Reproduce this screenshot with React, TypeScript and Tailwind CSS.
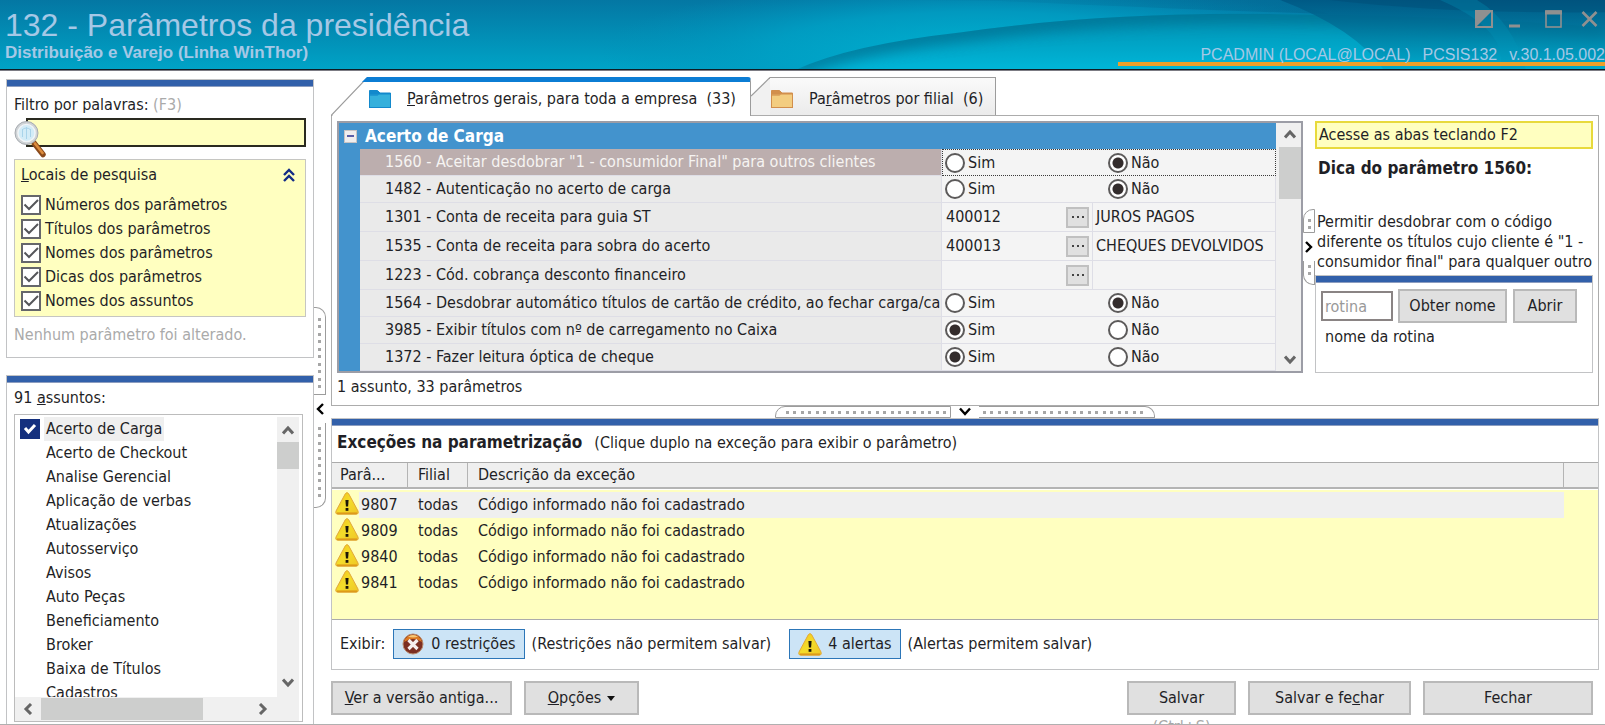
import type { ReactNode } from "react";
import clsx from "clsx";

type Choice = "sim" | "nao";

type Param = {
  code: string;
  title: string;
  choice?: Choice;
  value?: string;
  description?: string;
  selected?: boolean;
};

const searchPlaces = ["Números dos parâmetros", "Títulos dos parâmetros", "Nomes dos parâmetros", "Dicas dos parâmetros", "Nomes dos assuntos"];

const subjects = [
  "Acerto de Carga",
  "Acerto de Checkout",
  "Analise Gerencial",
  "Aplicação de verbas",
  "Atualizações",
  "Autosserviço",
  "Avisos",
  "Auto Peças",
  "Beneficiamento",
  "Broker",
  "Baixa de Títulos",
  "Cadastros",
];

const params: Param[] = [
  { code: "1560", title: 'Aceitar desdobrar "1 - consumidor Final" para outros clientes', choice: "nao", selected: true },
  { code: "1482", title: "Autenticação no acerto de carga", choice: "nao" },
  { code: "1301", title: "Conta de receita para guia ST", value: "400012", description: "JUROS PAGOS" },
  { code: "1535", title: "Conta de receita para sobra do acerto", value: "400013", description: "CHEQUES DEVOLVIDOS" },
  { code: "1223", title: "Cód. cobrança desconto financeiro", value: "", description: "" },
  { code: "1564", title: "Desdobrar automático títulos de cartão de crédito, ao fechar carga/ca", choice: "nao" },
  { code: "3985", title: "Exibir títulos com nº de carregamento no Caixa", choice: "sim" },
  { code: "1372", title: "Fazer leitura óptica de cheque", choice: "sim" },
];

const exceptions = ["9807", "9809", "9840", "9841"];

const Chevron = ({ className, d, width = 3 }: { className?: string; d: string; width?: number }) => (
  <svg viewBox="0 0 12 12" className={clsx("size-3 shrink-0", className)} fill="none" stroke="currentColor" strokeWidth={width} aria-hidden="true">
    <path d={d} />
  </svg>
);

const UP = "M1 9.5 L6 4 L11 9.5";
const DOWN = "M1 2.5 L6 8 L11 2.5";
const LEFT = "M9 1 L4 6 L9 11";
const RIGHT = "M3 1 L8 6 L3 11";

const WarningIcon = ({ className }: { className?: string }) => (
  <svg viewBox="0 0 24 23" className={clsx("h-[23px] w-6 shrink-0", className)} aria-hidden="true">
    <defs>
      <linearGradient id="warn" x1="0" y1="0" x2="1" y2="1">
        <stop offset="0" stopColor="#f4c21c" />
        <stop offset="0.5" stopColor="#f3dc2a" />
        <stop offset="1" stopColor="#efc526" />
      </linearGradient>
    </defs>
    <path d="M10.4 1.6 Q12 -0.4 13.6 1.6 L23 19 Q24 22 21.5 22.3 H2.5 Q0 22 1 19 Z" fill="url(#warn)" stroke="#e2a83a" strokeWidth="1" />
    <path d="M2 21.2 H22" stroke="#dd9a1a" strokeWidth="1.6" />
    <path d="M10.4 8 H13.6 L13.1 14.6 H10.9 Z" fill="#1c1608" />
    <rect x="10.6" y="16" width="2.8" height="2.8" fill="#1c1608" />
  </svg>
);

const ErrorIcon = () => (
  <svg viewBox="0 0 22 22" className="size-[22px] shrink-0" aria-hidden="true">
    <circle cx="11" cy="11" r="10" fill="#7c2f22" stroke="#b98a6c" strokeWidth="1" />
    <path d="M2 9 A9.2 9.2 0 0 1 20 9 Q11 3 2 9 Z" fill="#dd7a22" />
    <path d="M6 3.5 Q11 0.5 16 3.5 Q11 5.5 6 3.5 Z" fill="#f5c878" />
    <path d="M6.5 7 L15.5 16 M15.5 7 L6.5 16" stroke="#f6eeee" strokeWidth="3.2" />
  </svg>
);

const FolderIcon = ({ dark, light }: { dark: string; light: string }) => (
  <svg viewBox="0 0 24 20" className="h-5 w-6 shrink-0" aria-hidden="true">
    <path d="M1.5 1.5 H9.5 L12 4 H22.5 V6 H1.5 Z" fill={dark} stroke={dark} />
    <rect x="1.5" y="5" width="21" height="13.5" fill={light} stroke={dark} />
    <path d="M2 5 H11 L9.5 7 H2 Z" fill={dark} opacity="0.6" />
  </svg>
);

const MagnifierIcon = () => (
  <svg viewBox="0 0 32 38" className="h-[38px] w-8" aria-hidden="true">
    <path d="M20 23 L29 34.5" stroke="#8a4a1c" strokeWidth="5.5" strokeLinecap="round" />
    <path d="M21 23.5 L28.5 33" stroke="#dc8c3c" strokeWidth="2.6" strokeLinecap="round" />
    <circle cx="12.5" cy="13" r="11.5" fill="#cfd3d6" stroke="#a7abb0" strokeWidth="1" />
    <circle cx="12.5" cy="13" r="8.6" fill="#d3ecf7" stroke="#f2f5f7" strokeWidth="1.4" />
    <path d="M8.5 9 V17 M12.5 7 V19 M16.5 9 V17 M8 10 Q12 6 17 10" fill="none" stroke="#a9d4ea" strokeWidth="1" />
  </svg>
);

const Panel = ({ className, children }: { className?: string; children: ReactNode }) => (
  <section className={clsx("flex flex-col border border-[#c2c3c5] bg-white", className)}>
    <div className="h-[7px] shrink-0 border-b border-[#8c9dc0] bg-[#3260aa]" />
    {children}
  </section>
);

const GrayButton = ({ className, children }: { className?: string; children: ReactNode }) => (
  <button type="button" className={clsx("shrink-0 border-2 border-[#b9b9b9] bg-[#e0e0e0] text-center whitespace-nowrap", className)}>
    {children}
  </button>
);

const CheckLine = ({ id, label }: { id: string; label: string }) => (
  <div className="flex h-6 items-center gap-1">
    <span className="grid size-5 shrink-0">
      <input id={id} type="checkbox" defaultChecked className="col-start-1 row-start-1 size-5 appearance-none border-2 border-[#66676b] bg-white" />
      <svg viewBox="0 0 20 20" className="pointer-events-none col-start-1 row-start-1 size-5" fill="none" stroke="#55565a" strokeWidth="2" aria-hidden="true">
        <path d="M3.5 9.5 L8 14 L17 5" />
      </svg>
    </span>
    <label htmlFor={id}>{label}</label>
  </div>
);

const RadioOption = ({ name, label, checked }: { name: string; label: string; checked: boolean }) => (
  <label className="flex w-[163px] shrink-0 items-center gap-[3px]">
    <input
      type="radio"
      name={name}
      defaultChecked={checked}
      className="size-5 appearance-none rounded-full border-2 border-[#5c5a5a] bg-white checked:bg-[radial-gradient(circle,#332c2c_0_5px,#ffffff_6px)]"
    />
    {label}
  </label>
);

const WAVE = "M795 69 Q850 44 960 32 Q1110 11 1280 14 Q1450 15 1605 27";

const Header = () => (
  <header className="relative h-[71px] shrink-0 overflow-hidden border-b border-[#7c7c84] font-['Liberation_Sans',Arial,sans-serif] text-[#a5c8e6]">
    <svg viewBox="0 0 1605 69" preserveAspectRatio="none" className="absolute inset-0 h-full w-full" aria-hidden="true">
      <defs>
        <linearGradient id="base" x1="0" y1="0" x2="0" y2="1">
          <stop offset="0" stopColor="#0477a3" />
          <stop offset="1" stopColor="#00a4c7" />
        </linearGradient>
        <radialGradient id="glow" gradientUnits="userSpaceOnUse" cx="0" cy="0" r="1" gradientTransform="translate(980 50) scale(380 70)">
          <stop offset="0" stopColor="#00b0d0" />
          <stop offset="0.55" stopColor="#00a0c5" stopOpacity="0.8" />
          <stop offset="1" stopColor="#008fb8" stopOpacity="0" />
        </radialGradient>
        <linearGradient id="wave" gradientUnits="userSpaceOnUse" x1="0" y1="14" x2="0" y2="69">
          <stop offset="0" stopColor="#0090b2" />
          <stop offset="1" stopColor="#00b6d8" />
        </linearGradient>
        <linearGradient id="night" x1="0" y1="0" x2="0" y2="1">
          <stop offset="0" stopColor="#005a86" />
          <stop offset="0.5" stopColor="#00749a" stopOpacity="0.7" />
          <stop offset="1" stopColor="#0090b4" stopOpacity="0.3" />
        </linearGradient>
        <linearGradient id="dusk" x1="0" y1="0" x2="1" y2="0">
          <stop offset="0" stopColor="#006a94" stopOpacity="0" />
          <stop offset="1" stopColor="#005580" />
        </linearGradient>
        <clipPath id="wave-clip">
          <path d={`${WAVE} V69 Z`} />
        </clipPath>
        <filter id="soft" x="-5%" y="-60%" width="110%" height="220%">
          <feGaussianBlur stdDeviation="7" />
        </filter>
      </defs>
      <rect width="1605" height="69" fill="url(#base)" />
      <rect x="600" width="780" height="69" fill="url(#glow)" />
      <path d="M840 0 H1280 Q1310 8 1330 14 Q1150 8 1000 1 Z" fill="url(#dusk)" opacity="0.35" />
      <g clipPath="url(#wave-clip)">
        <rect x="780" width="825" height="69" fill="url(#wave)" />
        <path d={WAVE} fill="none" stroke="#006e90" strokeWidth="18" opacity="0.75" filter="url(#soft)" />
      </g>
      <path d="M1280 0 H1605 V69 H1384 Q1355 28 1280 0 Z" fill="url(#night)" />
      <path d="M1330 0 H1605 V12 Q1450 14 1330 0 Z" fill="#00486f" opacity="0.35" />
      <path d="M1477 0 Q1512 20 1526 69 H1500 Q1510 30 1440 0 Z" fill="#0096ba" opacity="0.3" />
    </svg>
    <div className="absolute inset-x-0 bottom-0 h-px bg-[#101c24]" />
    <div className="absolute right-0 bottom-1 h-1 w-[487px] bg-[#eda02a]" />
    <div className="relative flex h-full justify-between pl-[5px]">
      <div className="pt-[7px] whitespace-nowrap">
        <h1 className="text-[32px] leading-9">132 - Parâmetros da presidência</h1>
        <p className="text-[17px] leading-5 font-bold">Distribuição e Varejo (Linha WinThor)</p>
      </div>
      <div className="flex flex-col items-end justify-between pt-2.5 pb-[5px]">
        <div className="flex items-center pr-[7px] text-[#909090]">
          <button type="button" aria-label="Tema" className="mr-4">
            <svg viewBox="0 0 18 18" className="size-[18px]" aria-hidden="true">
              <rect x="1" y="1" width="16" height="16" fill="none" stroke="currentColor" strokeWidth="2" />
              <path d="M1 1 H17 L1 17 Z" fill="currentColor" />
            </svg>
          </button>
          <button type="button" aria-label="Minimizar" className="mr-6">
            <svg viewBox="0 0 12 18" className="h-[18px] w-3" aria-hidden="true">
              <path d="M0 16 H11" stroke="currentColor" strokeWidth="3" />
            </svg>
          </button>
          <button type="button" aria-label="Maximizar" className="mr-[18px]">
            <svg viewBox="0 0 18 18" className="size-[18px]" aria-hidden="true">
              <rect x="1" y="1" width="15" height="16" fill="none" stroke="currentColor" strokeWidth="1.6" />
              <path d="M0 2.5 H17" stroke="currentColor" strokeWidth="4" />
            </svg>
          </button>
          <button type="button" aria-label="Fechar janela">
            <svg viewBox="0 0 17 18" className="h-[18px] w-[17px]" aria-hidden="true">
              <path d="M1.5 2 L15.5 16 M15.5 2 L1.5 16" stroke="currentColor" strokeWidth="2.6" />
            </svg>
          </button>
        </div>
        <p className="flex gap-3 text-[16px] leading-5 whitespace-nowrap">
          <span>PCADMIN (LOCAL@LOCAL)</span>
          <span>PCSIS132</span>
          <span>v.30.1.05.002</span>
        </p>
      </div>
    </div>
  </header>
);

const FilterPanel = () => (
  <Panel className="shrink-0">
    <div className="px-[7px] pt-2 pb-3">
      <label htmlFor="filtro">
        Filtro por palavras: <span className="text-[#aaaaaa]">(F3)</span>
      </label>
      <div className="relative mt-[3px] pl-3">
        <input id="filtro" type="text" className="block h-[29px] w-full border-2 border-[#2a2a20] bg-[#ffffc0] pr-1 pl-6 outline-none" />
        <span className="pointer-events-none absolute top-0.5 left-0">
          <MagnifierIcon />
        </span>
      </div>
      <fieldset className="mt-3 border border-[#c6c6c2] bg-[#ffffc0] px-1.5 pt-[5px] pb-[3px]">
        <div className="mb-2 flex items-center justify-between pr-1">
          <span>
            <u>L</u>ocais de pesquisa
          </span>
          <button type="button" aria-label="Recolher" className="text-[#142c86]">
            <svg viewBox="0 0 12 14" className="h-3.5 w-3" fill="none" stroke="currentColor" strokeWidth="2.4" aria-hidden="true">
              <path d="M1 7 L6 2 L11 7 M1 13 L6 8 L11 13" />
            </svg>
          </button>
        </div>
        {searchPlaces.map((place) => (
          <CheckLine key={place} id={place} label={place} />
        ))}
      </fieldset>
      <p className="mt-2 text-[#aaaaaa]">Nenhum parâmetro foi alterado.</p>
    </div>
  </Panel>
);

const SubjectsPanel = () => (
  <Panel className="min-h-0 flex-1 border-b-0">
    <div className="flex min-h-0 flex-1 flex-col px-[7px] pt-[5px] pr-2.5 pb-0.5">
      <p>
        91 <u>a</u>ssuntos:
      </p>
      <div className="mt-1.5 flex min-h-0 flex-1 flex-col border border-[#bcbcbc]">
        <div className="flex min-h-0 flex-1">
          <ul className="min-w-0 flex-1 overflow-hidden pt-0.5">
            {subjects.map((subject, index) => (
              <li key={subject} className="flex h-6 items-center pl-[5px]">
                <span className="mr-1 grid size-5 shrink-0">
                  {index === 0 && (
                    <>
                      <input id="assunto-0" type="checkbox" defaultChecked className="col-start-1 row-start-1 size-5 appearance-none bg-[#14307e]" />
                      <svg viewBox="0 0 20 20" className="pointer-events-none col-start-1 row-start-1 size-5" fill="none" stroke="#ffffff" strokeWidth="3" aria-hidden="true">
                        <path d="M5 9 L8.5 13 L15 6" />
                      </svg>
                    </>
                  )}
                </span>
                {index === 0 ? (
                  <label htmlFor="assunto-0" className="bg-[#efefef] px-0.5 leading-6">
                    {subject}
                  </label>
                ) : (
                  <span className="px-0.5">{subject}</span>
                )}
              </li>
            ))}
          </ul>
          <div className="mt-0.5 mr-[3px] flex w-[22px] flex-col items-center bg-[#f0f0f0] text-[#666666]">
            <Chevron d={UP} className="mt-[7px] mb-[6px]" />
            <div className="h-[27px] w-full bg-[#cdcecd]" />
            <Chevron d={DOWN} className="mt-auto mb-2" />
          </div>
        </div>
        <div className="mr-[3px] flex h-6 shrink-0 items-center bg-[#f0f0f0] text-[#666666]">
          <Chevron d={LEFT} className="mx-[7px]" />
          <div className="h-[22px] w-[162px] bg-[#cdcecd]" />
          <Chevron d={RIGHT} className="mr-[30px] ml-auto" />
        </div>
      </div>
    </div>
  </Panel>
);

const DOTS_V = "w-[3px] bg-[repeating-linear-gradient(#a6a6a6_0_3px,transparent_3px_7px,#a6a6a6_7px_10px,transparent_10px_15px)]";
const DOTS_H = "h-[3px] flex-1 bg-[repeating-linear-gradient(90deg,#a6a6a6_0_3px,transparent_3px_7px,#a6a6a6_7px_10px,transparent_10px_15px)]";

const SideSplitter = () => (
  <div className="mt-[236px] mr-[5px] flex w-3 shrink-0 flex-col items-center">
    <div className="flex h-[88px] w-full justify-center rounded-tr-[10px] border border-l-0 border-[#9c9c9c] pt-2.5 pb-1">
      <div className={DOTS_V} />
    </div>
    <button type="button" aria-label="Recolher painel" className="flex h-7 items-center">
      <Chevron d={LEFT} className="text-black" width={2.4} />
    </button>
    <div className="flex h-[85px] w-full justify-center rounded-br-[10px] border border-t-0 border-l-0 border-[#9c9c9c] pt-1 pb-2">
      <div className={DOTS_V} />
    </div>
  </div>
);

const BottomSplitter = () => (
  <div className="flex h-3 shrink-0 items-center justify-center">
    <div className="flex h-3 w-[176px] items-center rounded-tl-[10px] border border-[#9c9c9c] pr-1 pl-2.5">
      <div className={DOTS_H} />
    </div>
    <button type="button" aria-label="Recolher exceções" className="flex w-7 justify-center">
      <Chevron d={DOWN} className="text-black" width={2.4} />
    </button>
    <div className="flex h-3 w-[176px] items-center rounded-tr-[10px] border border-l-0 border-[#9c9c9c] pr-2.5 pl-1">
      <div className={DOTS_H} />
    </div>
  </div>
);

const HintSplitter = () => (
  <div className="flex w-3 shrink-0 flex-col items-center justify-center">
    <div className="flex h-6 w-full items-center justify-center rounded-tl-[10px] border border-[#9c9c9c] pt-1.5">
      <div className="h-2.5 w-[3px] bg-[repeating-linear-gradient(#a6a6a6_0_3px,transparent_3px_7px)]" />
    </div>
    <button type="button" aria-label="Recolher dica" className="flex h-7 items-center">
      <Chevron d={RIGHT} className="text-black" width={2.4} />
    </button>
    <div className="flex h-6 w-full items-center justify-center rounded-bl-[10px] border border-t-0 border-[#9c9c9c] pb-1.5">
      <div className="h-2.5 w-[3px] bg-[repeating-linear-gradient(#a6a6a6_0_3px,transparent_3px_7px)]" />
    </div>
  </div>
);

const Tabs = () => (
  <div role="tablist" className="relative z-10 -mb-px flex h-[39px] items-start whitespace-nowrap">
    <button type="button" role="tab" aria-selected="true" className="flex h-[39px]">
      <svg viewBox="0 0 36 39" className="h-[39px] w-9" aria-hidden="true">
        <path d="M1 39 L36 1 V39 Z" fill="#ffffff" />
        <path d="M0.5 39 V38 L36 1" fill="none" stroke="#9c9c9c" strokeWidth="1.2" />
        <path d="M31 5 L36 0 V5 Z" fill="#0b7dd4" />
      </svg>
      <span className="flex h-full items-center gap-[15px] rounded-tr-[3px] border-t-[5px] border-r border-t-[#0b7dd4] border-r-[#9c9c9c] bg-white pr-3.5 pl-px">
        <FolderIcon dark="#1389cc" light="#35b0dc" />
        <span>
          <u>P</u>arâmetros gerais, para toda a empresa&nbsp; (33)
        </span>
      </span>
    </button>
    <button type="button" role="tab" aria-selected="false" className="flex h-[38px]">
      <svg viewBox="0 0 19 38" className="h-[38px] w-[19px]" aria-hidden="true">
        <path d="M0 19 L19 0.5 V38 H0 Z" fill="#f1f1f1" />
        <path d="M0 19 L19 0.5" fill="none" stroke="#9c9c9c" strokeWidth="1.2" />
      </svg>
      <span className="flex h-full items-center gap-[15px] border-t border-r border-[#9c9c9c] bg-linear-to-b from-[#fafafa] to-[#ebebeb] pt-1 pr-3">
        <FolderIcon dark="#d28f4c" light="#f3cd80" />
        <span>
          Pa<u>r</u>âmetros por filial&nbsp; (6)
        </span>
      </span>
    </button>
  </div>
);

const ParamRow = ({ param }: { param: Param }) => {
  const isLookup = param.value !== undefined;
  return (
    <tr className={isLookup ? "h-[29px]" : "h-[27px]"}>
      <td
        className={clsx(
          "overflow-hidden border-r border-b border-[#dedee6] p-0 pl-[25px] whitespace-nowrap",
          param.selected ? "bg-[#bcaeae] text-[#f6f4f2]" : "bg-[#eaeaea]",
        )}
      >
        {param.code} - {param.title}
      </td>
      {isLookup ? (
        <>
          <td className="border-r border-b border-[#dedee6] bg-[#f4f4f4] p-0">
            <div className="flex items-center justify-between pr-[3px] pl-1">
              <span>{param.value}</span>
              <button type="button" aria-label={`Pesquisar ${param.code}`} className="flex h-[21px] w-[23px] items-center justify-center gap-[3px] border-2 border-[#c0c0c0] bg-[#e0e0e0]">
                <i className="size-0.5 bg-[#444444]" />
                <i className="size-0.5 bg-[#444444]" />
                <i className="size-0.5 bg-[#444444]" />
              </button>
            </div>
          </td>
          <td className="border-r border-b border-[#dedee6] bg-[#f4f4f4] p-0 pl-[3px] whitespace-nowrap">{param.description}</td>
        </>
      ) : (
        <td colSpan={2} className={clsx("bg-[#f4f4f4] p-0", param.selected ? "border border-dotted border-[#3a3a3a]" : "border-r border-b border-[#dedee6]")}>
          <div className={clsx("flex", param.selected ? "pl-0.5" : "pl-[3px]")}>
            <RadioOption name={param.code} label="Sim" checked={param.choice === "sim"} />
            <RadioOption name={param.code} label="Não" checked={param.choice === "nao"} />
          </div>
        </td>
      )}
    </tr>
  );
};

const ParamGrid = () => (
  <div className="flex min-w-0 flex-1 border-2 border-[#9c9da6] bg-[#dedee6]">
    <div className="min-w-0 flex-1">
      <div className="flex h-[26px] items-center gap-2 bg-[#4393cd] pl-[5px] text-[17px] font-bold text-white">
        <button type="button" aria-label="Recolher grupo" className="flex size-[13px] items-center justify-center border border-[#c9c4c4] bg-[#f0eeee]">
          <i className="h-0.5 w-[7px] bg-[#5b5fa8]" />
        </button>
        Acerto de Carga
      </div>
      <div className="flex">
        <div className="w-[21px] shrink-0 bg-[#4393cd]" />
        <table className="w-full table-fixed border-separate border-spacing-0">
          <colgroup>
            <col />
            <col className="w-[151px]" />
            <col className="w-[183px]" />
          </colgroup>
          <tbody>
            {params.map((param) => (
              <ParamRow key={param.code} param={param} />
            ))}
          </tbody>
        </table>
      </div>
    </div>
    <div className="flex w-[25px] shrink-0 flex-col items-center bg-[#f0f0f0] pl-0.5 text-[#666666]">
      <Chevron d={UP} className="mt-[5px] mb-[7px]" />
      <div className="h-[52px] w-[22px] bg-[#cdcecd]" />
      <Chevron d={DOWN} className="mt-auto mb-[5px]" />
    </div>
  </div>
);

const HintPane = () => (
  <aside className="w-[278px] shrink-0">
    <p className="h-7 border-2 border-[#e8da3c] bg-[#ffffc0] pl-0.5 leading-6">Acesse as abas teclando F2</p>
    <h2 className="mt-[9px] ml-[3px] text-[17px] leading-5 font-bold">Dica do parâmetro 1560:</h2>
    <p className="mt-[34px] ml-0.5 whitespace-nowrap">
      Permitir desdobrar com o código
      <br />
      diferente os títulos cujo cliente é "1 -
      <br />
      consumidor final" para qualquer outro
    </p>
    <Panel className="mt-[3px] h-[98px]">
      <div className="flex items-start pt-1.5 pl-[5px]">
        <input type="text" aria-label="Rotina" placeholder="rotina" className="mt-0.5 mr-[5px] h-[30px] w-[72px] border-2 border-[#8a8484] bg-white px-0.5 outline-none placeholder:text-[#999999]" />
        <GrayButton className="mr-1.5 h-[34px] w-[109px]">Obter nome</GrayButton>
        <GrayButton className="h-[34px] w-16">Abrir</GrayButton>
      </div>
      <p className="mt-1 ml-[9px]">nome da rotina</p>
    </Panel>
  </aside>
);

const ExceptionsPanel = () => (
  <Panel className="min-h-0 flex-1">
    <h2 className="mt-1.5 mb-[9px] ml-[5px] leading-5">
      <b className="mr-3 text-[17px]">Exceções na parametrização</b>(Clique duplo na exceção para exibir o parâmetro)
    </h2>
    <div className="min-h-0 flex-1 border-t border-b border-[#ababab] bg-[#ffffc0]">
      <table className="w-full table-fixed border-separate border-spacing-0">
        <colgroup>
          <col className="w-[76px]" />
          <col className="w-[60px]" />
          <col />
          <col className="w-[34px]" />
        </colgroup>
        <thead>
          <tr className="h-[26px] bg-[#efefef] text-left">
            <th className="border-r border-b-2 border-[#b4b4b4] p-0 pl-2 font-normal">Parâ...</th>
            <th className="border-r border-b-2 border-[#b4b4b4] p-0 pl-2.5 font-normal">Filial</th>
            <th className="border-r border-b-2 border-[#b4b4b4] p-0 pl-2.5 font-normal">Descrição da exceção</th>
            <th aria-label="Vazio" className="border-b-2 border-[#b4b4b4] p-0" />
          </tr>
        </thead>
        <tbody>
          <tr className="h-[3px]">
            <td colSpan={4} className="border-t border-white p-0" />
          </tr>
          {exceptions.map((code, index) => {
            const fill = index === 0 && "bg-[#efefef]";
            return (
              <tr key={code} className="h-[26px]">
                <td className="p-0 pl-[3px]">
                  <div className="flex">
                    <WarningIcon />
                    <span className={clsx("flex-1 pl-0.5 leading-[26px]", fill)}>{code}</span>
                  </div>
                </td>
                <td className={clsx("p-0 pl-2.5", fill)}>todas</td>
                <td className={clsx("p-0 pl-2.5", fill)}>Código informado não foi cadastrado</td>
                <td className="p-0" />
              </tr>
            );
          })}
        </tbody>
      </table>
    </div>
    <div className="flex h-[49px] shrink-0 items-center pb-px pl-2">
      <span className="mr-2">Exibir:</span>
      <button type="button" className="mr-[7px] flex h-[30px] items-center gap-[7px] border border-[#2c76b8] bg-[#cce4f6] px-2">
        <ErrorIcon />0 restrições
      </button>
      <span className="mr-[18px]">(Restrições não permitem salvar)</span>
      <button type="button" className="mr-[7px] flex h-[30px] items-center gap-1.5 border border-[#2c76b8] bg-[#cce4f6] px-2">
        <WarningIcon />4 alertas
      </button>
      <span>(Alertas permitem salvar)</span>
    </div>
  </Panel>
);

const ActionBar = () => (
  <div className="mt-[11px] flex h-[43px] shrink-0 items-start justify-between pr-1.5">
    <div className="flex gap-3">
      <GrayButton className="h-[34px] w-[181px]">
        <u>V</u>er a versão antiga...
      </GrayButton>
      <GrayButton className="flex h-[34px] w-[115px] items-center justify-center gap-1.5">
        <span>
          <u>O</u>pções
        </span>
        <svg viewBox="0 0 8 5" className="h-[5px] w-2" aria-hidden="true">
          <path d="M0 0 H8 L4 5 Z" fill="#111111" />
        </svg>
      </GrayButton>
    </div>
    <div className="flex gap-3">
      <div className="flex flex-col items-center gap-0.5">
        <GrayButton className="h-[34px] w-[109px]">Salvar</GrayButton>
        <span className="text-[#a8a8a8]">(Ctrl+S)</span>
      </div>
      <GrayButton className="h-[34px] w-[163px]">
        Salvar e fe<u>c</u>har
      </GrayButton>
      <GrayButton className="h-[34px] w-[170px]">Fechar</GrayButton>
    </div>
  </div>
);

export default function App() {
  return (
    <div className="flex h-screen flex-col overflow-hidden bg-white font-['DejaVu_Sans_Condensed','DejaVu_Sans',Tahoma,sans-serif] text-[16px] leading-5 text-[#1f1f26]">
      <Header />
      <div className="flex min-h-0 flex-1 overflow-hidden border-b border-[#b0b0b0] pr-1.5 pl-1.5">
        <div className="flex w-[308px] shrink-0 flex-col gap-[17px] pt-2">
          <FilterPanel />
          <SubjectsPanel />
        </div>
        <SideSplitter />
        <main className="flex min-w-0 flex-1 flex-col pt-1.5">
          <Tabs />
          <div className="border border-[#acacac] px-[5px] pt-[5px] pb-2">
            <div className="flex">
              <ParamGrid />
              <HintSplitter />
              <HintPane />
            </div>
            <p className="mt-1">1 assunto, 33 parâmetros</p>
          </div>
          <BottomSplitter />
          <ExceptionsPanel />
          <ActionBar />
        </main>
      </div>
    </div>
  );
}
